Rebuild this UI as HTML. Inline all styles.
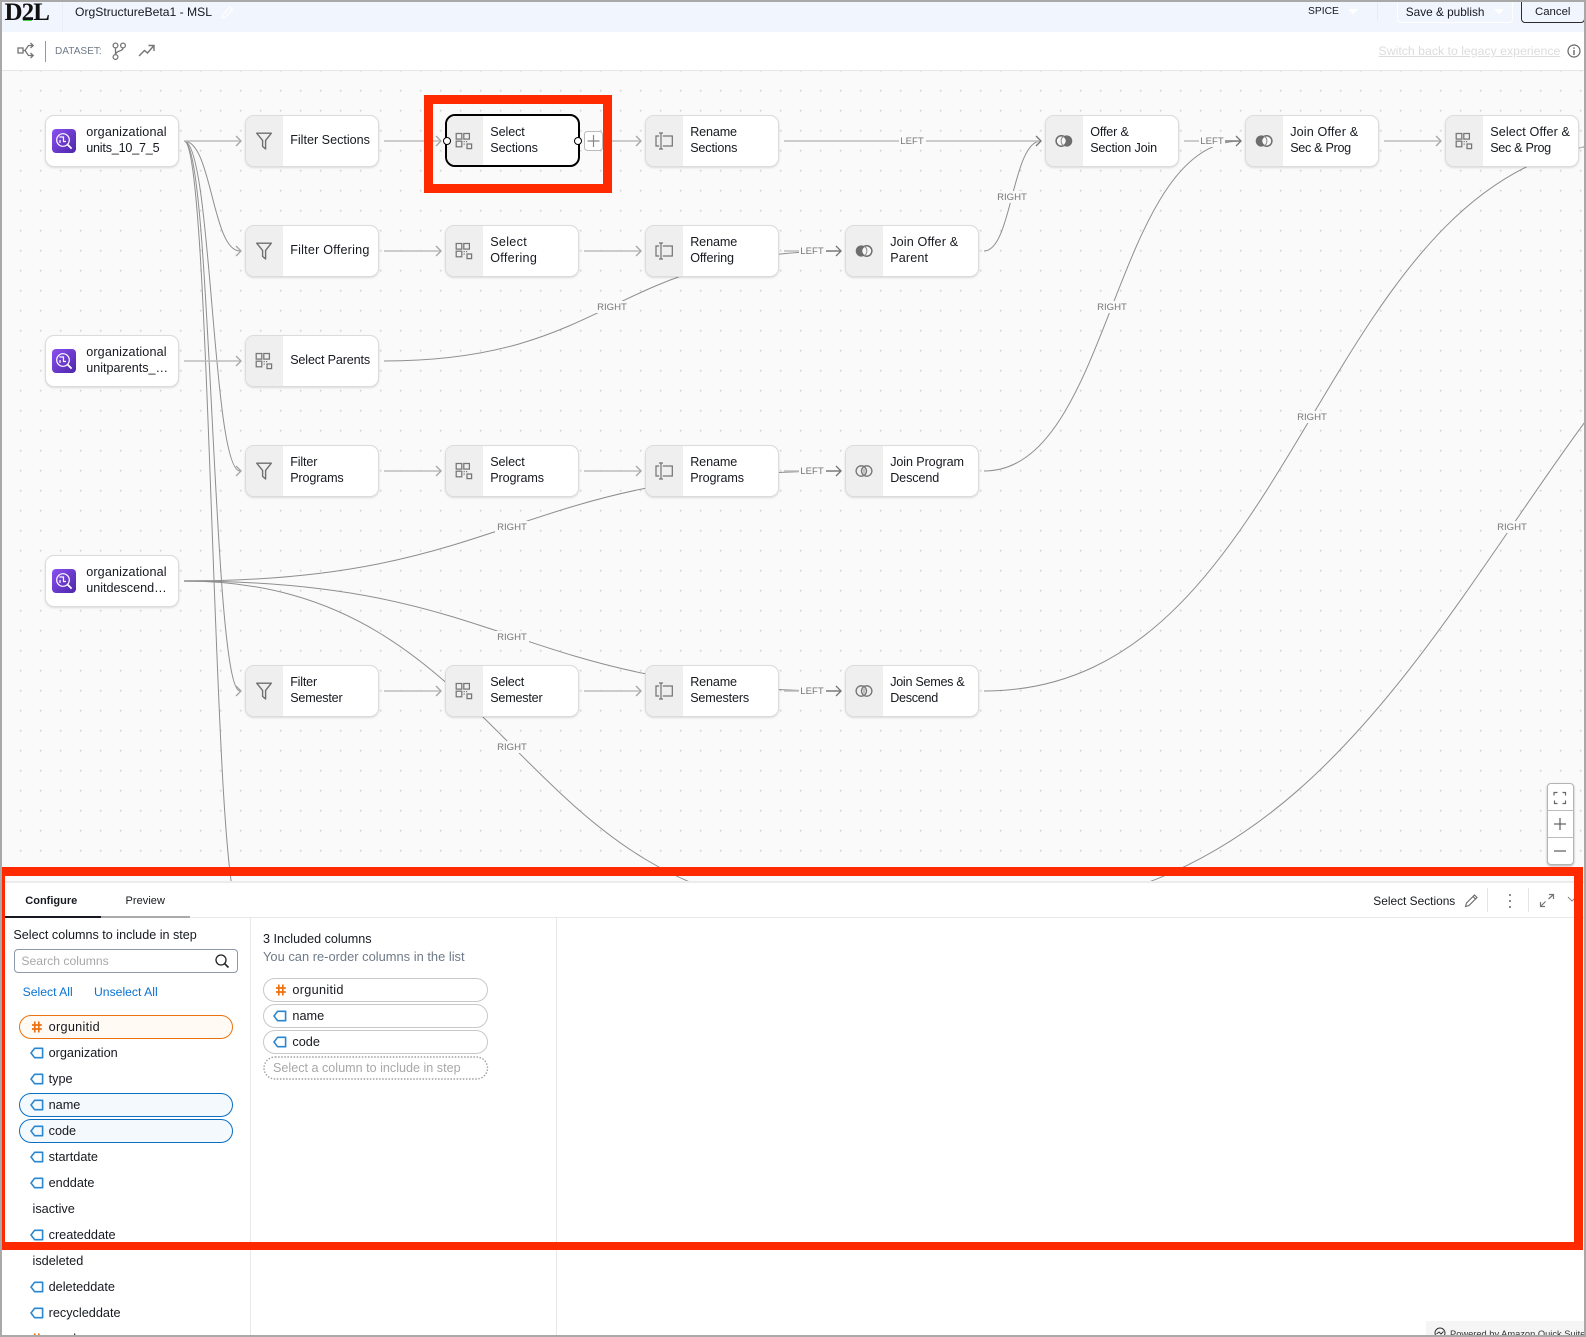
<!DOCTYPE html>
<html><head><meta charset="utf-8"><title>OrgStructureBeta1 - MSL</title>
<style>
html,body{margin:0;padding:0;background:#fff}
#p{position:relative;width:1586px;height:1337px;overflow:hidden;font-family:"Liberation Sans",Arial,sans-serif;color:#16191f;font-size:12.6px;background:#fff}
#p *{box-sizing:border-box}
.a{position:absolute;white-space:nowrap}
.v{transform:translateY(-50%);line-height:16px}
#hdr{position:absolute;left:0;top:0;width:1586px;height:32px;background:#f1f5fd}
#tb{position:absolute;left:0;top:32px;width:1586px;height:39px;background:#fff;border-bottom:1px solid #e6e6e6}
#cv{position:absolute;left:0;top:71px;width:1586px;height:811px;background-color:#fafafa;background-image:radial-gradient(circle at 1px 1px,#d2d2d2 0,#d2d2d2 .7px,transparent 1.1px);background-size:20px 20px;background-position:-.3px -1.3px}
#edges{position:absolute;left:0;top:0}
.n{position:absolute;margin-left:-.5px;width:134px;height:52px;background:#fff;border:1px solid #dcdcdc;border-radius:9px;box-shadow:0 1px 2px rgba(0,0,0,.13);overflow:hidden}
.n i{position:absolute;left:0;top:0;width:36.5px;height:100%;background:#efefef}
.n svg{position:absolute;left:8px;top:14.5px;width:20px;height:20px}
.n b{position:absolute;left:44.2px;top:0;bottom:2px;display:flex;align-items:center;font-weight:normal;line-height:16px;white-space:nowrap}
.n b span{display:block}
.s i{display:none}
.s b{left:40.2px}
.s u{position:absolute;left:6.3px;top:13px;width:24px;height:24px;border-radius:4px;background:linear-gradient(135deg,#8a4ff0,#4d27a8)}
.s svg{left:2px;top:2px}
.st{fill:none;stroke:#757575;stroke-width:1.25}
#panel{position:absolute;left:0;top:881px;width:1586px;height:456px;background:#fff;border-top:2px solid #ececec}
.vl{position:absolute;width:1px;background:#e8e8e8}
.pill{position:absolute;height:24px;border-radius:12px}
.col{font-size:12.7px}
.tag,.hash{position:absolute;width:14px;height:12px}
.r{position:absolute;background:#ff2a00}
</style></head><body>
<div id="p">
<svg width="0" height="0" style="position:absolute"><defs>
<symbol id="sel" viewBox="0 0 20 20"><g class="st"><rect x="2.2" y="2.5" width="5.6" height="5.6"/><rect x="9.8" y="2.5" width="5.6" height="5.6"/><rect x="2.2" y="10.2" width="5.6" height="5.6"/><rect x="13" y="13" width="4.6" height="4.6"/></g><g fill="#757575"><rect x="9.6" y="10" width="1.2" height="1.2"/><rect x="12" y="10" width="1.2" height="1.2"/><rect x="9.6" y="12.5" width="1.2" height="1.2"/></g></symbol>
<symbol id="fil" viewBox="0 0 20 20"><path d="M2.7 2.2H17.3L11.6 9.4V18L8.6 15.4V9.4Z" fill="none" stroke="#6f6f6f" stroke-width="1.4" stroke-linejoin="round"/></symbol>
<symbol id="ren" viewBox="0 0 20 20"><path class="st" d="M7 2V18M5 2H9M5 18H9M5.2 5H2V15H5.2M8.8 5H18.3V15H8.8"/></symbol>
<symbol id="jl" viewBox="0 0 20 20"><circle cx="12.7" cy="10" r="5.2" fill="#f7f7f7" stroke="#6e6e6e" stroke-width="1.5"/><path d="M10 5.1A5.6 5.6 0 1 0 10 14.9A5.6 5.6 0 0 1 10 5.1Z" fill="#6e6e6e"/><path d="M10 5.1A5.600 5.600 0 0 1 10 14.9" fill="none" stroke="#8a8a8a" stroke-width="1"/></symbol>
<symbol id="jr" viewBox="0 0 20 20"><circle cx="7.3" cy="10" r="5.2" fill="#f7f7f7" stroke="#6e6e6e" stroke-width="1.5"/><path d="M10 5.1A5.6 5.6 0 1 1 10 14.9A5.6 5.6 0 0 0 10 5.1Z" fill="#6e6e6e"/><path d="M10 5.1A5.600 5.600 0 0 0 10 14.9" fill="none" stroke="#8a8a8a" stroke-width="1"/></symbol>
<symbol id="ji" viewBox="0 0 20 20"><circle cx="7.3" cy="10" r="5.2" fill="none" stroke="#757575" stroke-width="1.3"/><circle cx="12.700" cy="10" r="5.2" fill="none" stroke="#757575" stroke-width="1.3"/><path d="M10 7.5V12.5" stroke="#a0a0a0" stroke-width="1.2"/></symbol>
<symbol id="src" viewBox="0 0 20 20"><g fill="none" stroke="#fff" stroke-width="1.2"><circle cx="9" cy="9" r="6.3"/><path d="M13.6 13.6L17.6 17.6" stroke-width="1.8"/><path d="M5.500 6H9.500V10.500H12M6 9V12" /></g></symbol>
<symbol id="tg" viewBox="0 0 14 12"><path d="M4.6 1.3H12.6V10.7H4.6L1 6Z" fill="none" stroke="#2a86cf" stroke-width="1.6" stroke-linejoin="round"/></symbol>
<symbol id="hs" viewBox="0 0 14 12"><path d="M4.800 .5V11.5M8.800 .5V11.500M2 4H11.800M2 8H11.800" fill="none" stroke="#ec7211" stroke-width="1.700"/></symbol>
</defs></svg>

<div id="hdr"></div>
<div class="a" style="left:62px;top:2px;width:1px;height:30px;background:#e9eef8"></div>
<div class="a" style="left:4.5px;top:-3px;font:bold 25px/32px 'Liberation Serif',serif;letter-spacing:-.9px;color:#111">D2L</div>
<div class="a" style="left:22.5px;top:19.6px;width:9.5px;height:1.6px;background:#3fd14a"></div>
<div class="a v" style="left:75px;top:12px;font-size:12.15px">OrgStructureBeta1 - MSL</div>
<svg class="a" style="left:220px;top:4px" width="14" height="16"><path d="M2 14L3 10.5L10 3L12.5 5.5L5.5 13Z" fill="none" stroke="#fff" stroke-width="1.2"/></svg>
<div class="a v" style="left:1308px;top:12px;font-size:10.3px">SPICE</div>
<svg class="a" style="left:1347px;top:8px" width="12" height="8"><path d="M1 1H11L6 6.5Z" fill="#fff"/></svg>
<div class="a" style="left:1377px;top:3px;width:1px;height:17px;background:#e6eaf2"></div>
<div class="a" style="left:1397px;top:-2px;width:116px;height:25px;border:1px solid #fff;border-radius:4px"></div>
<div class="a v" style="left:1405.8px;top:11.5px;font-size:11.8px">Save &amp; publish</div>
<svg class="a" style="left:1493px;top:8px" width="12" height="8"><path d="M1 1H11L6 6.5Z" fill="#fff"/></svg>
<div class="a" style="left:1521px;top:-4px;width:64px;height:27px;border:1.3px solid #2d2d2d;border-radius:4px"></div>
<div class="a v" style="left:1535px;top:11.5px;font-size:11.4px">Cancel</div>

<div id="tb"></div>
<svg class="a" style="left:17px;top:42px" width="19" height="18" fill="none" stroke="#757575" stroke-width="1.3"><rect x="1" y="6" width="5" height="5"/><path d="M6 8.5H8L11.5 3.5H16M6 8.5H8L11.5 13.5H16M13.5 1L16.2 3.5L13.5 6M13.5 11L16.2 13.5L13.5 16"/></svg>
<div class="a" style="left:44.5px;top:41px;width:1px;height:21px;background:#999"></div>
<div class="a v" style="left:55px;top:51.5px;font-size:10.1px;color:#6f7a87">DATASET:</div>
<svg class="a" style="left:111px;top:42px" width="16" height="18" fill="none" stroke="#757575" stroke-width="1.3"><circle cx="4.5" cy="3.5" r="2.4"/><circle cx="12" cy="3.5" r="2.4"/><circle cx="4.5" cy="15" r="2.4"/><path d="M4.5 6V12.5M12 6C12 9.5 5 8.5 4.5 12.5"/></svg>
<svg class="a" style="left:138px;top:43px" width="18" height="16" fill="none" stroke="#757575" stroke-width="1.4"><path d="M1 13L6.5 7.5L9.5 10L16 2.5M10.5 2.5H16V8"/></svg>
<div class="a v" style="left:1378.5px;top:51px;font-size:12.3px;color:#dcdcdc;text-decoration:underline">Switch back to legacy experience</div>
<svg class="a" style="left:1567px;top:44px" width="14" height="14" fill="none" stroke="#666" stroke-width="1.2"><circle cx="7" cy="7" r="6"/><path d="M7 6V11M7 3.4V4.8" stroke-width="1.4"/></svg>

<div id="cv"></div>
<svg id="edges" width="1586" height="882" viewBox="0 0 1586 882">
<g fill="none" stroke="#8e8e8e" stroke-width="1">
<path d="M184 141C212 141 212 251 240 251"/>
<path d="M184 141C212 141 212 471 240 471"/>
<path d="M184 141C212 141 212 691 240 691"/>
<path d="M184 141C212 141 212 911 240 911"/>
<path d="M384 361C612 361 612 251 841 251"/>
<path d="M184 581C512 581 512 471 841 471"/>
<path d="M184 581C512 581 512 691 841 691"/>
<path d="M184 581C512 581 512 911 841 911"/>
<path d="M984 251C1012 251 1012 141 1041 141"/>
<path d="M984 471C1112 471 1112 141 1241 141"/>
<path d="M984 691C1312 691 1312 141 1640 141"/>
<path d="M984 911C1512 911 1512 141 2040 141"/>
</g>
<g fill="none" stroke="#bdbdbd" stroke-width="1.6">
<path d="M184 141H241M384 141H441M584 141H641M784 141H1041M1184 141H1241M1384 141H1441"/>
<path d="M384 251H441M584 251H641M784 251H841"/>
<path d="M184 361H241"/>
<path d="M384 471H441M584 471H641M784 471H841"/>
<path d="M384 691H441M584 691H641M784 691H841"/>
<path d="M184 581H210" stroke="#8e8e8e"/>
</g>
<g fill="none" stroke="#a5a5a5" stroke-width="1.3">
<path d="M236 136L241 141L236 146M236 246L241 251L236 256M236 356L241 361L236 366M236 466L241 471L236 476M236 686L241 691L236 696"/>
<path d="M436 136L441 141L436 146M436 246L441 251L436 256M436 466L441 471L436 476M436 686L441 691L436 696"/>
<path d="M636 136L641 141L636 146M636 246L641 251L636 256M636 466L641 471L636 476M636 686L641 691L636 696"/>
<path d="M1436 136L1441 141L1436 146"/>
</g>
<g fill="none" stroke="#757575" stroke-width="1.3">
<path d="M825 251H841M836 246L841 251L836 256M825 471H841M836 466L841 471L836 476M825 691H841M836 686L841 691L836 696"/>
<path d="M1036 136L1041 141L1036 146M1225 141H1241M1236 136L1241 141L1236 146"/>
</g>
<g fill="#fafafa">
<rect x="899" y="135" width="27" height="12"/><rect x="799" y="245" width="27" height="12"/><rect x="799" y="465" width="27" height="12"/><rect x="799" y="685" width="27" height="12"/><rect x="1199" y="135" width="26" height="12"/>
<rect x="595" y="301" width="34" height="12"/><rect x="995" y="191" width="34" height="12"/><rect x="1095" y="301" width="34" height="12"/><rect x="1295" y="411" width="34" height="12"/><rect x="1495" y="521" width="34" height="12"/><rect x="495" y="521" width="34" height="12"/><rect x="495" y="631" width="34" height="12"/><rect x="495" y="741" width="34" height="12"/>
</g>
<g fill="#777" font-family="Liberation Sans,Arial,sans-serif" font-size="9.6" text-anchor="middle">
<text x="912" y="144">LEFT</text><text x="812" y="254">LEFT</text><text x="812" y="474">LEFT</text><text x="812" y="694">LEFT</text><text x="1212" y="144">LEFT</text>
<text x="612" y="310">RIGHT</text><text x="1012" y="200">RIGHT</text><text x="1112" y="310">RIGHT</text><text x="1312" y="420">RIGHT</text><text x="1512" y="530">RIGHT</text><text x="512" y="530">RIGHT</text><text x="512" y="640">RIGHT</text><text x="512" y="750">RIGHT</text>
</g>
</svg>

<div class="n s" style="left:45.5px;top:115.3px"><u><svg viewBox="0 0 20 20"><use href="#src"/></svg></u><b><span><span style="letter-spacing:.15px">organizational</span><span style="letter-spacing:-.2px">units_10_7_5</span></span></b></div>
<div class="n s" style="left:45.5px;top:335.3px"><u><svg viewBox="0 0 20 20"><use href="#src"/></svg></u><b><span><span style="letter-spacing:.15px">organizational</span><span>unitparents_…</span></span></b></div>
<div class="n s" style="left:45.5px;top:555.3px"><u><svg viewBox="0 0 20 20"><use href="#src"/></svg></u><b><span><span style="letter-spacing:.15px">organizational</span><span>unitdescend…</span></span></b></div>

<div class="n" style="left:245.5px;top:115.3px"><i></i><svg><use href="#fil"/></svg><b>Filter Sections</b></div>
<div class="n" style="left:245.5px;top:225.3px"><i></i><svg><use href="#fil"/></svg><b style="letter-spacing:.22px">Filter Offering</b></div>
<div class="n" style="left:245.5px;top:335.3px"><i></i><svg><use href="#sel"/></svg><b style="letter-spacing:-.15px">Select Parents</b></div>
<div class="n" style="left:245.5px;top:445.3px"><i></i><svg><use href="#fil"/></svg><b style="letter-spacing:-.15px">Filter<br>Programs</b></div>
<div class="n" style="left:245.5px;top:665.3px"><i></i><svg><use href="#fil"/></svg><b style="letter-spacing:-.2px">Filter<br>Semester</b></div>

<div class="n" style="left:445.5px;top:225.3px"><i></i><svg><use href="#sel"/></svg><b style="letter-spacing:.3px">Select<br>Offering</b></div>
<div class="n" style="left:445.5px;top:445.3px"><i></i><svg><use href="#sel"/></svg><b style="letter-spacing:-.1px">Select<br>Programs</b></div>
<div class="n" style="left:445.5px;top:665.3px"><i></i><svg><use href="#sel"/></svg><b style="letter-spacing:-.2px">Select<br>Semester</b></div>

<div class="n" style="left:645.5px;top:115.3px"><i></i><svg><use href="#ren"/></svg><b style="letter-spacing:-.15px">Rename<br>Sections</b></div>
<div class="n" style="left:645.5px;top:225.3px"><i></i><svg><use href="#ren"/></svg><b style="letter-spacing:-.1px">Rename<br>Offering</b></div>
<div class="n" style="left:645.5px;top:445.3px"><i></i><svg><use href="#ren"/></svg><b style="letter-spacing:-.1px">Rename<br>Programs</b></div>
<div class="n" style="left:645.5px;top:665.3px"><i></i><svg><use href="#ren"/></svg><b style="letter-spacing:-.15px">Rename<br>Semesters</b></div>

<div class="n" style="left:845.5px;top:225.3px"><i></i><svg><use href="#jl"/></svg><b style="letter-spacing:.15px">Join Offer &amp;<br>Parent</b></div>
<div class="n" style="left:845.5px;top:445.3px"><i></i><svg><use href="#ji"/></svg><b style="letter-spacing:-.1px">Join Program<br>Descend</b></div>
<div class="n" style="left:845.5px;top:665.3px"><i></i><svg><use href="#ji"/></svg><b style="letter-spacing:-.28px">Join Semes &amp;<br>Descend</b></div>

<div class="n" style="left:1045.5px;top:115.3px"><i></i><svg><use href="#jr"/></svg><b style="letter-spacing:-.15px">Offer &amp;<br>Section Join</b></div>
<div class="n" style="left:1245.5px;top:115.3px"><i></i><svg><use href="#jl"/></svg><b><span><span style="letter-spacing:.15px">Join Offer &amp;</span><span style="letter-spacing:-.3px">Sec &amp; Prog</span></span></b></div>
<div class="n" style="left:1445.5px;top:115.3px"><i></i><svg><use href="#sel"/></svg><b><span><span style="letter-spacing:.12px">Select Offer &amp;</span><span style="letter-spacing:-.3px">Sec &amp; Prog</span></span></b></div>
<div class="a" style="left:1579px;top:147px;width:5px;height:1px;background:#bbb"></div>

<!-- selected node -->
<div class="n" style="margin:0;left:444.8px;top:114.3px;width:135px;height:53px;border:2px solid #000;border-radius:10px;box-shadow:none"><i></i><svg style="left:7.5px;top:14.5px"><use href="#sel"/></svg><b style="left:43.5px;bottom:2px;letter-spacing:-.1px">Select<br>Sections</b></div>
<div class="a" style="left:442.8px;top:137.3px;width:8px;height:8px;border-radius:50%;background:#fff;border:1.6px solid #000"></div>
<div class="a" style="left:573.6px;top:137.3px;width:8px;height:8px;border-radius:50%;background:#fff;border:1.6px solid #000"></div>
<svg class="a" style="left:584px;top:131px" width="20" height="20"><rect x=".5" y=".5" width="18" height="19" rx="3" fill="#fff" stroke="#bbb"/><path d="M3.5 10H15.5M9.5 4V16" stroke="#888" stroke-width="1.2"/></svg>

<!-- zoom controls -->
<div class="a" style="left:1546.7px;top:783.3px;width:27px;height:82px;background:#fff;border:1px solid #b5b5b5;border-radius:4px;box-shadow:0 1px 2px rgba(0,0,0,.3)"></div>
<div class="a" style="left:1547px;top:810.3px;width:26px;height:1px;background:#bbb"></div>
<div class="a" style="left:1547px;top:837.3px;width:26px;height:1px;background:#bbb"></div>
<svg class="a" style="left:1553px;top:791px" width="14" height="14" fill="none" stroke="#666" stroke-width="1.2"><path d="M1 4.5V1.5H4.5M9.5 1.5H12.5V4.5M12.5 9.5V12.5H9.5M4.5 12.5H1.500V9.5"/></svg>
<svg class="a" style="left:1553px;top:817px" width="14" height="14" fill="none" stroke="#666" stroke-width="1.3"><path d="M1 7H13M7 1V13"/></svg>
<svg class="a" style="left:1553px;top:844px" width="14" height="14" fill="none" stroke="#666" stroke-width="1.3"><path d="M1 7H13"/></svg>

<!-- bottom panel -->
<div id="panel">
<div class="a" style="left:0;top:34px;width:1586px;height:1px;background:#e8e8e8"></div>
<div class="a" style="left:2px;top:32.500px;width:99px;height:2px;background:#16191f"></div>
<div class="a" style="left:101px;top:33px;width:89px;height:1.5px;background:#aaa"></div>
<div class="vl" style="left:250px;top:35px;height:420px"></div>
<div class="vl" style="left:556px;top:35px;height:420px"></div>
</div>
<div class="a v" style="left:25.300px;top:901px;font-size:11px;font-weight:bold">Configure</div>
<div class="a v" style="left:125.500px;top:901px;font-size:11px;letter-spacing:.05px">Preview</div>
<div class="a v" style="left:13.400px;top:935px">Select columns to include in step</div>
<div class="a" style="left:14px;top:949.300px;width:224px;height:23.500px;border:1px solid #8d99a8;border-radius:4px"></div>
<div class="a v" style="left:21.400px;top:961px;font-size:12.200px;color:#a8a8a8">Search columns</div>
<svg class="a" style="left:214px;top:953px" width="16" height="16" fill="none" stroke="#222" stroke-width="1.3"><circle cx="7" cy="7" r="5"/><path d="M10.800 10.800L14.500 14.500" stroke-width="1.600"/></svg>
<div class="a v" style="left:22.600px;top:992px;font-size:12.200px;color:#0972d3">Select All</div>
<div class="a v" style="left:94px;top:992px;font-size:12.200px;color:#0972d3">Unselect All</div>

<div class="pill" style="left:19px;top:1015.300px;width:214px;height:23.500px;background:#fffaf3;border:1.300px solid #ec7211"></div>
<div class="pill" style="left:19px;top:1093.300px;width:214px;height:23.500px;background:#f4f9fd;border:1.300px solid #0b6fc4"></div>
<div class="pill" style="left:19px;top:1119.300px;width:214px;height:23.500px;background:#f4f9fd;border:1.300px solid #0b6fc4"></div>

<svg class="hash" style="left:29.500px;top:1021px"><use href="#hs"/></svg><div class="a v col" style="left:48.600px;top:1027px;letter-spacing:.3px">orgunitid</div>
<svg class="tag" style="left:29.500px;top:1047px"><use href="#tg"/></svg><div class="a v col" style="left:48.600px;top:1053px">organization</div>
<svg class="tag" style="left:29.500px;top:1073px"><use href="#tg"/></svg><div class="a v col" style="left:48.600px;top:1079px">type</div>
<svg class="tag" style="left:29.500px;top:1099px"><use href="#tg"/></svg><div class="a v col" style="left:48.600px;top:1105px">name</div>
<svg class="tag" style="left:29.500px;top:1125px"><use href="#tg"/></svg><div class="a v col" style="left:48.600px;top:1131px">code</div>
<svg class="tag" style="left:29.500px;top:1151px"><use href="#tg"/></svg><div class="a v col" style="left:48.600px;top:1157px">startdate</div>
<svg class="tag" style="left:29.500px;top:1177px"><use href="#tg"/></svg><div class="a v col" style="left:48.600px;top:1183px">enddate</div>
<div class="a v col" style="left:32.500px;top:1209px">isactive</div>
<svg class="tag" style="left:29.500px;top:1229px"><use href="#tg"/></svg><div class="a v col" style="left:48.600px;top:1235px">createddate</div>
<div class="a v col" style="left:32.500px;top:1261px">isdeleted</div>
<svg class="tag" style="left:29.500px;top:1281px"><use href="#tg"/></svg><div class="a v col" style="left:48.600px;top:1287px">deleteddate</div>
<svg class="tag" style="left:29.500px;top:1307px"><use href="#tg"/></svg><div class="a v col" style="left:48.600px;top:1313px">recycleddate</div>
<svg class="hash" style="left:29.500px;top:1333px"><use href="#hs"/></svg><div class="a v col" style="left:48.600px;top:1339px">number</div>

<div class="a v" style="left:263px;top:939px">3 Included columns</div>
<div class="a v" style="left:263px;top:957px;font-size:12.900px;color:#6f7a87">You can re-order columns in the list</div>
<div class="pill" style="left:263.300px;top:978px;width:225px;border:1px solid #c8c8c8"></div>
<div class="pill" style="left:263.300px;top:1004px;width:225px;border:1px solid #c8c8c8"></div>
<div class="pill" style="left:263.300px;top:1030px;width:225px;border:1px solid #c8c8c8"></div>
<svg class="a" style="left:263px;top:1056px" width="226" height="24"><rect x="1" y="1" width="223.500" height="22" rx="11" fill="none" stroke="#a0a0a0" stroke-width="1.400" stroke-dasharray="1.500 1.600"/></svg>
<svg class="hash" style="left:273.500px;top:984px"><use href="#hs"/></svg><div class="a v col" style="left:292.400px;top:990px;letter-spacing:.3px">orgunitid</div>
<svg class="tag" style="left:273px;top:1010px"><use href="#tg"/></svg><div class="a v col" style="left:292.400px;top:1016px">name</div>
<svg class="tag" style="left:273px;top:1036px"><use href="#tg"/></svg><div class="a v col" style="left:292.400px;top:1042px">code</div>
<div class="a v" style="left:273px;top:1068px;color:#a8a8a8">Select a column to include in step</div>

<div class="a v" style="left:1373.300px;top:900.700px;font-size:11.900px">Select Sections</div>
<svg class="a" style="left:1464px;top:893px" width="15" height="15" fill="none" stroke="#666" stroke-width="1.100"><path d="M1.500 13.500L2.500 10L10.500 2L13 4.500L5 12.500ZM9 3.500L11.500 6"/></svg>
<div class="a" style="left:1487.300px;top:888px;width:1px;height:24px;background:#e4e4e4"></div>
<div class="a" style="left:1509px;top:894px;width:2.400px;height:2.400px;border-radius:50%;background:#666"></div>
<div class="a" style="left:1509px;top:900px;width:2.400px;height:2.400px;border-radius:50%;background:#666"></div>
<div class="a" style="left:1509px;top:906px;width:2.400px;height:2.400px;border-radius:50%;background:#666"></div>
<div class="a" style="left:1528.300px;top:888px;width:1px;height:24px;background:#e4e4e4"></div>
<svg class="a" style="left:1539px;top:893px" width="16" height="15" fill="none" stroke="#757575" stroke-width="1.200"><path d="M1.500 13.500L6.500 8.500M9.500 6L14.500 1.500M1.500 9V13.500H6M10 1.500H14.500V6"/></svg>
<svg class="a" style="left:1567px;top:896px" width="10" height="8" fill="none" stroke="#888" stroke-width="1.100"><path d="M1 1L5 5L9 1"/></svg>

<div class="a" style="left:1426px;top:1320.700px;width:158px;height:15px;background:#f5f5f5"></div>
<svg class="a" style="left:1434px;top:1327px" width="12" height="12" fill="none" stroke="#333" stroke-width="1"><circle cx="6" cy="6" r="5"/><path d="M2.500 7L5 5L7 7L9.500 4.500"/></svg>
<div class="a v" style="left:1450px;top:1333.500px;font-size:9.300px;color:#333">Powered by Amazon Quick Suite</div>

<!-- red highlight boxes -->
<div class="r" style="left:424.300px;top:95.300px;width:187.400px;height:8.700px"></div>
<div class="r" style="left:424.300px;top:183.700px;width:187.400px;height:9px"></div>
<div class="r" style="left:424.300px;top:95.300px;width:9.100px;height:97.400px"></div>
<div class="r" style="left:602.600px;top:95.300px;width:9.100px;height:97.400px"></div>
<div class="r" style="left:2px;top:867.300px;width:1581px;height:9px"></div>
<div class="r" style="left:2px;top:1241.500px;width:1581px;height:8.800px"></div>
<div class="r" style="left:2px;top:867.300px;width:2.800px;height:383px"></div>
<div class="r" style="left:1574px;top:867.300px;width:9px;height:383px"></div>

<!-- screenshot frame -->
<div class="a" style="left:0;top:0;width:1586px;height:2px;background:#a9a9a9"></div>
<div class="a" style="left:0;top:1335px;width:1586px;height:2px;background:#a9a9a9"></div>
<div class="a" style="left:0;top:0;width:2px;height:1337px;background:#a9a9a9"></div>
<div class="a" style="left:1584px;top:0;width:2px;height:1337px;background:#a9a9a9"></div>
</div>
</body></html>
